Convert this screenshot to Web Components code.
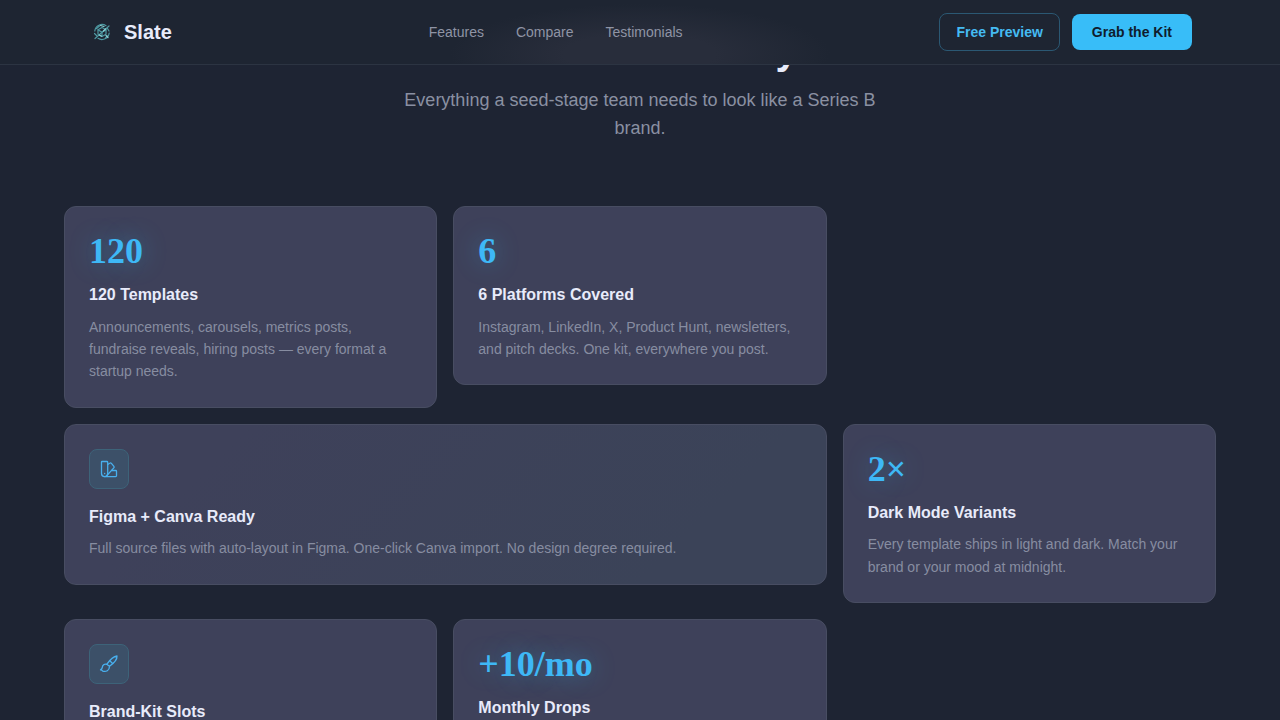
<!DOCTYPE html>
<html lang="en">
<head>
<meta charset="utf-8">
<meta name="viewport" content="width=device-width, initial-scale=1">
<title>Slate</title>
<style>
  :root {
    --bg: #1e2433;
    --card: #3e415a;
    --line: #484d62;
    --text: #e8ebfa;
    --muted: #878da1;
    --accent: #38bdf8;
  }

  body {
    display: flex;
    flex-direction: column;
    height: 100vh;
    margin: 0;
    background: var(--bg);
    color: var(--text);
    font-family: "Liberation Sans", Arial, sans-serif;
  }

  main {
    flex: 1;
    min-height: 0;
    overflow-y: auto;
    scrollbar-width: none;
  }
</style>
</head>
<body>
  <site-nav>
    <nav-link href="#features">Features</nav-link>
    <nav-link href="#compare">Compare</nav-link>
    <nav-link href="#testimonials">Testimonials</nav-link>
    <slate-button slot="actions" variant="outline">Free Preview</slate-button>
    <slate-button slot="actions">Grab the Kit</slate-button>
  </site-nav>

  <main>
    <feature-section id="features">
      <span slot="heading">Built for Velocity</span>
      <span slot="lead">Everything a seed-stage team needs to look like a Series B brand.</span>

      <feature-card stat="120">
        <span slot="title">120 Templates</span>
        Announcements, carousels, metrics posts, fundraise reveals, hiring posts — every format a startup needs.
      </feature-card>
      <feature-card stat="6">
        <span slot="title">6 Platforms Covered</span>
        Instagram, LinkedIn, X, Product Hunt, newsletters, and pitch decks. One kit, everywhere you post.
      </feature-card>
      <feature-card icon="swatches" wide>
        <span slot="title">Figma + Canva Ready</span>
        Full source files with auto-layout in Figma. One-click Canva import. No design degree required.
      </feature-card>
      <feature-card stat="2×">
        <span slot="title">Dark Mode Variants</span>
        Every template ships in light and dark. Match your brand or your mood at midnight.
      </feature-card>
      <feature-card icon="brush">
        <span slot="title">Brand-Kit Slots</span>
      </feature-card>
      <feature-card stat="+10/mo">
        <span slot="title">Monthly Drops</span>
      </feature-card>
    </feature-section>
  </main>

<script>
  const ICONS = {
    swatches: `
      <path d="M3 2.500h4.900a.8.8 0 0 1 .8.8v11.200a3.100 3.100 0 0 1-6.200 0V3a.5.5 0 0 1 .5-.5z"/>
      <path d="M8.700 5.500l2-1.300a1.300 1.300 0 0 1 1.700.2l2.500 2.900a1.200 1.200 0 0 1-.1 1.600L7.700 16.700"/>
      <path d="M12.700 11.500h4a.8.8 0 0 1 .8.8v4.500a.8.8 0 0 1-.8.8H5.600"/>
      <path d="M5.600 14.500h.1"/>`,
    brush: `
      <path d="M7.700 10.300C10.500 6.400 14.300 2.500 18 2c.3 3.700-3.600 7.500-7.500 10.300z"/>
      <path d="M10.800 6.800l2.800 2.600"/>
      <path d="M7.700 10.300c-2.300-.7-4.300.9-4.400 3.100-.1 1.400-.9 2-1.800 2.500 1.200.1 1.800.5 2.300 1.200 3.100 1 6.700-.5 6.700-4.500"/>`
  };

  class SiteNav extends HTMLElement {
    constructor() {
      super();
      this.attachShadow({ mode: 'open' });
    }

    connectedCallback() {
      this.shadowRoot.innerHTML = `
        <style>
          :host {
            display: block;
            border-bottom: 1px solid #2c3442;
            background: radial-gradient(190px 50px at 50% 54px, #282d3b 40%, #1e2532 100%);
          }

          header {
            display: flex;
            align-items: center;
            justify-content: space-between;
            height: 64px;
            padding: 0 88px;
          }

          .brand {
            display: flex;
            align-items: center;
            gap: 8px;
            color: inherit;
            font-size: 20px;
            font-weight: 700;
            line-height: 24px;
            text-decoration: none;
          }

          .brand svg {
            width: 28px;
            height: 28px;
            fill: none;
            stroke: #4f9aa3;
            stroke-width: 1.2;
            stroke-linecap: round;
          }

          nav {
            display: flex;
            gap: 32px;
          }

          .actions {
            display: flex;
            align-items: center;
            gap: 12px;
          }
        </style>
        <header>
          <a class="brand" href="#">
            <svg viewBox="0 0 28 28" aria-hidden="true">
              <path d="M6.800 13a7.300 7.300 0 0 1 11.200-5.300M21.200 15a7.300 7.300 0 0 1-11.200 5.300"/>
              <path d="M8.500 10.500l3-2.500M6.500 15.500l2 2M19.500 10.500l1.500 2.500M17.500 20l2-2"/>
              <path d="M21 8L7 20.500M14 9.500l4 2.300v4.400L14 18.500l-4-2.300v-4.400z"/>
              <path d="M10 11.800l4 2.500 4-2.500M14 14.300v4.200"/>
              <path stroke="#8bd0d2" d="M12.500 7.500l3.500 1M15.500 13l2-2M11.500 17l2 1.200M18 17.500l2 2"/>
            </svg>
            Slate
          </a>
          <nav><slot></slot></nav>
          <div class="actions"><slot name="actions"></slot></div>
        </header>
      `;
    }
  }

  class NavLink extends HTMLElement {
    constructor() {
      super();
      this.attachShadow({ mode: 'open' });
    }

    connectedCallback() {
      this.shadowRoot.innerHTML = `
        <style>
          :host { display: block; }

          a {
            display: block;
            color: #8f94a5;
            font-size: 14px;
            line-height: 22px;
            text-decoration: none;
          }

          a:hover { color: var(--text); }
        </style>
        <a href="${this.getAttribute('href')}"><slot></slot></a>
      `;
    }
  }

  class SlateButton extends HTMLElement {
    constructor() {
      super();
      this.attachShadow({ mode: 'open' });
    }

    connectedCallback() {
      this.shadowRoot.innerHTML = `
        <style>
          :host { display: block; }

          button {
            display: block;
            padding: 10px 20px;
            border: 0;
            border-radius: 8px;
            background: var(--accent);
            color: #0f1c2e;
            font: 700 14px/16px "Liberation Sans", Arial, sans-serif;
            white-space: nowrap;
            cursor: pointer;
          }

          :host([variant="outline"]) button {
            padding: 10px 16px;
            border: 1px solid #2b5873;
            background: transparent;
            color: #45bbf2;
          }
        </style>
        <button type="button"><slot></slot></button>
      `;
    }
  }

  class FeatureSection extends HTMLElement {
    constructor() {
      super();
      this.attachShadow({ mode: 'open' });
    }

    connectedCallback() {
      this.shadowRoot.innerHTML = `
        <style>
          :host {
            display: block;
            padding: 96px 64px;
          }

          .intro {
            max-width: 480px;
            margin: 0 auto 64px;
            text-align: center;
          }

          h2 {
            margin: 0 0 12px;
            font-size: 40px;
            font-weight: 700;
            line-height: 48px;
          }

          p {
            margin: 0;
            color: #8a90a2;
            font-size: 18px;
            line-height: 28px;
          }

          .grid {
            display: grid;
            grid-template-columns: repeat(3, minmax(0, 1fr));
            gap: 16px;
            align-items: start;
          }

          ::slotted([wide]) { grid-column: span 2; }
        </style>
        <section>
          <div class="intro">
            <h2><slot name="heading"></slot></h2>
            <p><slot name="lead"></slot></p>
          </div>
          <div class="grid"><slot></slot></div>
        </section>
      `;
    }
  }

  class FeatureCard extends HTMLElement {
    constructor() {
      super();
      this.attachShadow({ mode: 'open' });
    }

    connectedCallback() {
      const stat = this.getAttribute('stat');
      const icon = this.getAttribute('icon');

      this.shadowRoot.innerHTML = `
        <style>
          :host {
            display: block;
            box-sizing: border-box;
            padding: 24px;
            border: 1px solid var(--line);
            border-radius: 12px;
            background: var(--card);
          }

          :host([wide]) {
            background: linear-gradient(135deg, var(--card) 20%, #3b4358 80%);
          }

          .stat {
            margin-bottom: 11px;
            color: #3eb8f6;
            font: 700 36px/40px "Liberation Serif", "Times New Roman", serif;
            text-shadow: 0 0 24px rgba(56, 189, 248, 0.4);
          }

          .icon {
            display: flex;
            align-items: center;
            justify-content: center;
            box-sizing: border-box;
            width: 40px;
            height: 40px;
            margin-bottom: 15px;
            border: 1px solid #3d6379;
            border-radius: 8px;
            background: #3c5068;
          }

          .icon svg {
            width: 20px;
            height: 20px;
            fill: none;
            stroke: #49b0ee;
            stroke-width: 1.3;
            stroke-linecap: round;
            stroke-linejoin: round;
          }

          h3 {
            margin: 0 0 8px;
            font-size: 16px;
            font-weight: 700;
            line-height: 1.6;
          }

          p {
            margin: 0;
            color: var(--muted);
            font-size: 14px;
            line-height: 1.6;
          }
        </style>
        ${stat ? `<div class="stat">${stat}</div>` : ''}
        ${icon ? `<div class="icon"><svg viewBox="0 0 20 20" aria-hidden="true">${ICONS[icon]}</svg></div>` : ''}
        <h3><slot name="title"></slot></h3>
        <p><slot></slot></p>
      `;
    }
  }

  customElements.define('site-nav', SiteNav);
  customElements.define('nav-link', NavLink);
  customElements.define('slate-button', SlateButton);
  customElements.define('feature-section', FeatureSection);
  customElements.define('feature-card', FeatureCard);

  // Open on the features, with the section heading just under the nav
  document.querySelector('main').scrollTop = 135;
</script>
</body>
</html>
